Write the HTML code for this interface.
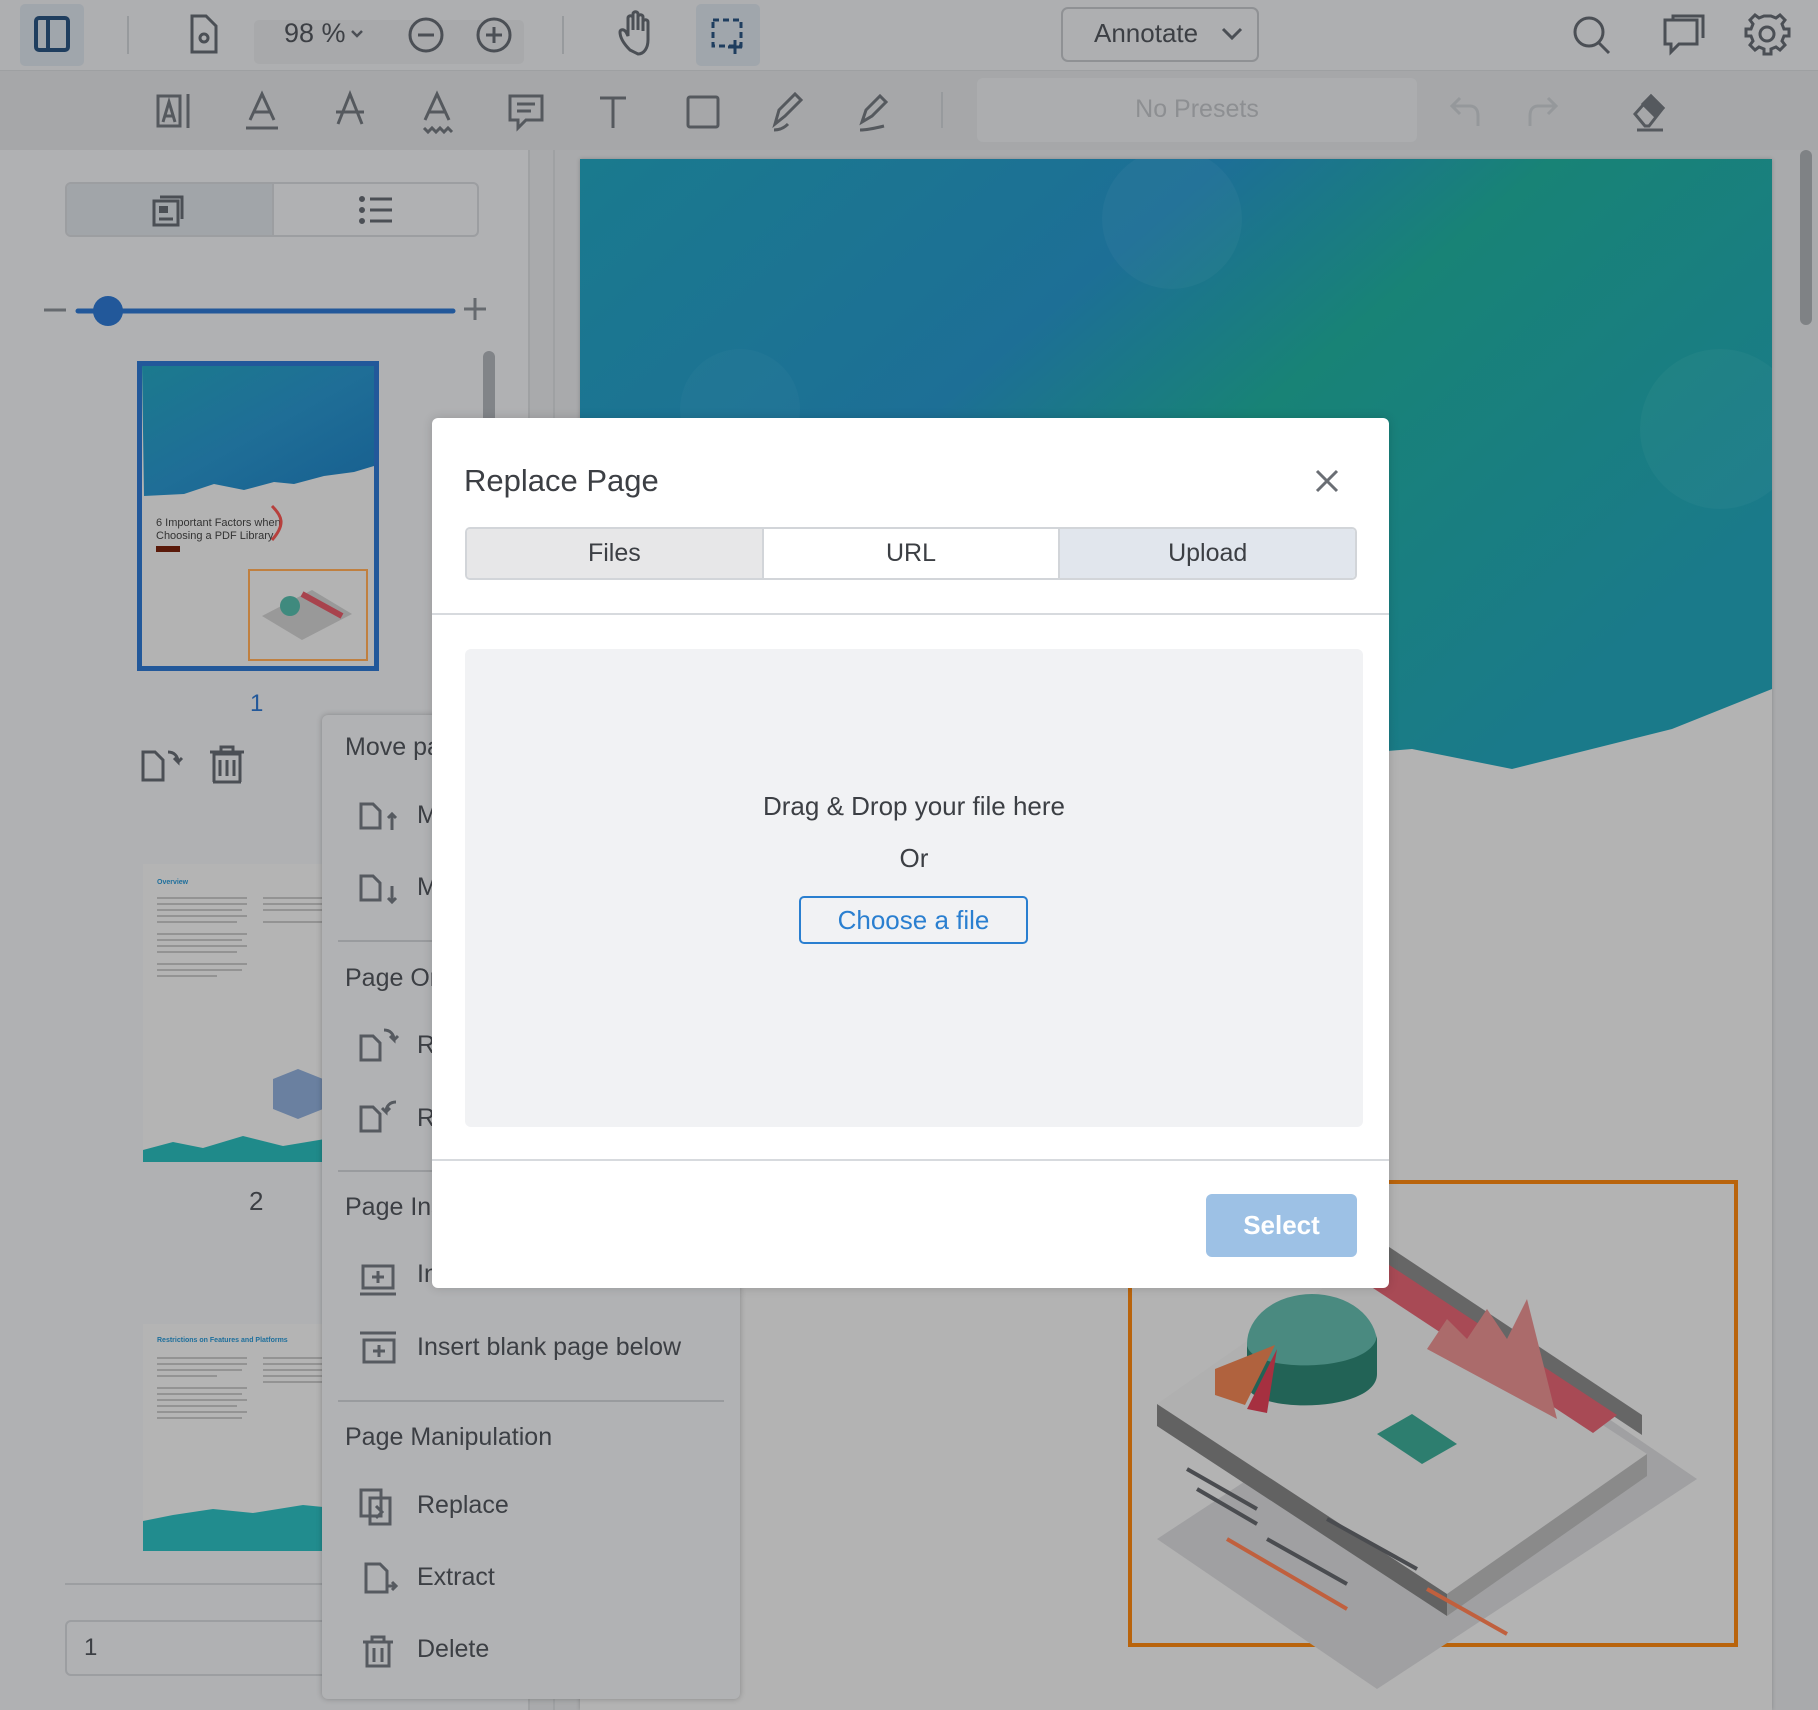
<!DOCTYPE html>
<html><head><meta charset="utf-8"><style>
*{margin:0;padding:0;box-sizing:border-box}
body{width:1818px;height:1710px;overflow:hidden;background:#a9aaac;font-family:"Liberation Sans",sans-serif;position:relative}
.a{position:absolute}
.t{font-family:"Liberation Sans",sans-serif;color:#3c3f44}
svg{position:absolute;overflow:visible}
</style></head><body>
<!-- top toolbar -->
<div class="a" style="left:0;top:0;width:1818px;height:70px;background:#aeafb1"></div>
<div class="a" style="left:0;top:70px;width:1818px;height:80px;background:#a6a7a9;border-top:1px solid #9ea0a2"></div>
<div class="a" style="left:20px;top:4px;width:64px;height:62px;background:#a0a6ac;border-radius:5px"></div>
<svg style="left:0;top:0" width="1818" height="150" fill="none" stroke="#4b4f55" stroke-width="3">
<rect x="36" y="18" width="32" height="32" rx="3" stroke="#1f3e5f" stroke-width="4"/><line x1="48" y1="18" x2="48" y2="50" stroke="#1f3e5f" stroke-width="4"/>
<line x1="128" y1="16" x2="128" y2="54" stroke="#979a9d" stroke-width="2"/>
<path d="M192 16h14l10 10v26h-24z"/><circle cx="204" cy="38" r="4"/>
<rect x="254" y="20" width="270" height="44" rx="5" fill="#a8a9ab" stroke="none"/>
<circle cx="426" cy="35" r="16"/><line x1="418" y1="35" x2="434" y2="35"/>
<circle cx="494" cy="35" r="16"/><line x1="486" y1="35" x2="502" y2="35"/><line x1="494" y1="27" x2="494" y2="43"/>
<path d="M352 31l5 5 5-5" stroke-width="2.5"/>
<line x1="563" y1="16" x2="563" y2="54" stroke="#979a9d" stroke-width="2"/>
<path d="M630 50c-6-6-10-12-10-18 0-3 4-3 6 0l2 4V18c0-3 5-3 5 0v12-16c0-3 5-3 5 0v16-13c0-3 5-3 5 0v14-9c0-3 5-3 5 0v18c0 8-4 14-10 14z"/>
<rect x="696" y="4" width="64" height="62" rx="5" fill="#a0a6ac" stroke="none"/>
<rect x="713" y="20" width="28" height="26" stroke="#1f3e5f" stroke-dasharray="6 4"/><path d="M735 40v14M728 47h14" stroke="#1f3e5f"/>
<rect x="1062" y="8" width="196" height="53" rx="6" fill="#aeafb1" stroke="#8f9194" stroke-width="2"/>
<path d="M1223 29l9 9 9-9"/>
<circle cx="1589" cy="32" r="14"/><line x1="1599" y1="43" x2="1609" y2="53"/>
<path d="M1665 20h32v24h-18l-8 8v-8h-6z"/><path d="M1673 20v-4h30v22"/>
<circle cx="1767" cy="34" r="7"/><path d="M1767 16l5 2 4-3 5 5-3 4 2 5h5v7h-5l-2 5 3 4-5 5-4-3-5 2v5h-7v-5l-5-2-4 3-5-5 3-4-2-5h-5v-7h5l2-5-3-4 5-5 4 3 5-2z" transform="translate(4 0)"/>
<g stroke="#55595e">
<rect x="158" y="96" width="22" height="30"/><path d="M163 122l6-20 6 20M165 116h8"/><line x1="188" y1="94" x2="188" y2="128"/>
<path d="M250 120l12-26 12 26M254 112h16"/><line x1="246" y1="128" x2="278" y2="128"/>
<path d="M338 124l12-30 12 30M336 112h28"/>
<path d="M425 120l12-26 12 26M429 112h16"/><path d="M424 128l4 4 4-4 4 4 4-4 4 4 4-4 4 4"/>
<path d="M510 96h32v24h-16l-8 8v-8h-8z"/><path d="M517 104h18M517 111h14"/>
<path d="M600 98h26M613 98v30"/>
<rect x="688" y="97" width="30" height="30" rx="2"/>
<path d="M775 124l4-14 16-16 6 6-16 16zM774 130c6 0 10-2 14-6"/>
<path d="M862 122l4-12 14-14 6 6-14 14zM860 130c8 0 16-2 24-4"/>
<line x1="942" y1="92" x2="942" y2="128" stroke="#979a9d" stroke-width="2"/>
<path d="M1460 98l-8 8 8 8M1452 106h18c6 0 8 5 8 10v10" stroke="#95989b"/>
<path d="M1548 98l8 8-8 8M1556 106h-18c-6 0-8 5-8 10v10" stroke="#95989b"/>
<path d="M1645 126l-10-12 16-18 12 12-14 18zM1637 130h26" stroke-width="3"/><path d="M1651 96l12 12-8 8-12-12z" fill="#55595e"/>
</g>
</svg>
<div class="a t" style="left:284px;top:18px;font-size:27px;color:#3c3f44">98 %</div>
<div class="a t" style="left:1094px;top:18px;font-size:26px;color:#3c3f44">Annotate</div>
<div class="a" style="left:977px;top:78px;width:440px;height:64px;background:#acadaf;border-radius:6px"></div>
<div class="a t" style="left:977px;top:95px;width:440px;text-align:center;font-size:25px;color:#8d8f92">No Presets</div>

<!-- left panel -->
<div class="a" style="left:0;top:150px;width:530px;height:1560px;background:#b0b1b3;border-right:2px solid #9fa1a3"></div>
<div class="a" style="left:553px;top:150px;width:2px;height:1560px;background:#9fa1a3"></div>
<div class="a" style="left:65px;top:182px;width:414px;height:55px;border:2px solid #9c9ea1;border-radius:6px;background:#b0b1b3;overflow:hidden"><div style="width:207px;height:100%;background:#a1a5a9;border-right:2px solid #9c9ea1"></div></div>
<svg style="left:0;top:0" width="560" height="800" fill="none" stroke="#4b4f55" stroke-width="3">
<rect x="154" y="201" width="24" height="24"/><path d="M160 197h22v22"/><rect x="159" y="206" width="9" height="7" fill="#4b4f55" stroke="none"/><path d="M159 219h14"/>
<g stroke-width="3"><circle cx="362" cy="199" r="1.5"/><circle cx="362" cy="210" r="1.5"/><circle cx="362" cy="221" r="1.5"/><path d="M370 199h22M370 210h22M370 221h22"/></g>
<line x1="44" y1="310" x2="66" y2="310" stroke="#666a6f" stroke-width="3"/>
<line x1="78" y1="311" x2="453" y2="311" stroke="#22589a" stroke-width="5" stroke-linecap="round"/>
<circle cx="108" cy="311" r="15" fill="#22589a" stroke="none"/>
<path d="M464 309h22M475 298v22" stroke="#666a6f"/>
<rect x="483" y="351" width="12" height="120" rx="6" fill="#818488" stroke="none"/>
<path d="M143 780v-28h12l8 8v20zM168 752c6 0 10 4 10 10l-4-4M178 762l4-4"/>
<path d="M213 782h28M214 782v-28h26v28M220 760v16M227 760v16M234 760v16M210 752h34M221 752v-5h12v5"/>
</svg>
<!-- thumbnail 1 -->
<div class="a" style="left:137px;top:361px;width:242px;height:310px;border:5px solid #22589a;background:#b3b3b3;overflow:hidden">
 <svg style="left:0;top:0" width="232" height="300"><defs><linearGradient id="g1" x1="0" y1="0" x2="1" y2="1"><stop offset="0" stop-color="#1b7a8e"/><stop offset=".5" stop-color="#1f6e97"/><stop offset="1" stop-color="#175f90"/></linearGradient></defs>
 <path d="M0 0h232v100l-20 6-30 4-30 8-20-2-30 8-30-6-30 10-40 2z" fill="url(#g1)"/>
 <text x="14" y="160" font-size="11" fill="#333" font-family="Liberation Sans">6 Important Factors when</text>
 <text x="14" y="173" font-size="11" fill="#333" font-family="Liberation Sans">Choosing a PDF Library</text>
 <rect x="14" y="180" width="24" height="6" fill="#5a1a0a"/>
 <path d="M130 140c10 10 14 18 0 34" stroke="#b7403d" stroke-width="3" fill="none"/>
 <rect x="107" y="204" width="118" height="90" fill="none" stroke="#c08040" stroke-width="2"/>
 <path d="M120 250l50-26 40 24-50 26z" fill="#999"/><circle cx="148" cy="240" r="10" fill="#3f8a7e"/><path d="M160 228l40 22" stroke="#a8434d" stroke-width="6"/>
 </svg>
</div>
<div class="a" style="left:250px;top:690px;font-size:24px;color:#22589a">1</div>
<!-- thumbnail 2 -->
<div class="a" style="left:143px;top:864px;width:200px;height:298px;background:#b4b4b4;overflow:hidden">
 <svg style="left:0;top:0" width="200" height="298">
 <text x="14" y="20" font-size="7" fill="#1e6f9c" font-weight="bold" font-family="Liberation Sans">Overview</text>
 <g stroke="#888" stroke-width="1.5"><path d="M14 34h90M14 40h90M14 46h85M14 52h90M14 58h80M14 70h90M14 76h85M14 82h90M14 88h80M14 100h90M14 106h85M14 112h60M120 34h80M120 40h80M120 46h80M120 58h80"/></g>
 <path d="M0 298v-12l30-8 30 6 40-12 40 10 60-10v26z" fill="#1f8a8a"/>
 <path d="M130 215l25-10 25 10v30l-25 10-25-10z" fill="#6a80a0"/>
 </svg>
</div>
<div class="a" style="left:249px;top:1186px;font-size:26px;color:#3c3f44">2</div>
<!-- thumbnail 3 -->
<div class="a" style="left:143px;top:1324px;width:200px;height:227px;background:#b4b4b4;overflow:hidden">
 <svg style="left:0;top:0" width="200" height="227">
 <text x="14" y="18" font-size="7" fill="#1e6f9c" font-weight="bold" font-family="Liberation Sans">Restrictions on Features and Platforms</text>
 <g stroke="#888" stroke-width="1.5"><path d="M14 34h90M14 40h90M14 46h85M14 52h60M14 64h90M14 70h85M14 76h90M14 82h80M14 88h90M14 94h85M120 34h80M120 40h80M120 46h80M120 52h80M120 58h80"/></g>
 <path d="M0 227v-30l30-6 40-6 40 4 50-8 40 4v42z" fill="#218c8e"/>
 </svg>
</div>
<div class="a" style="left:65px;top:1583px;width:460px;height:2px;background:#9c9ea1"></div>
<div class="a" style="left:65px;top:1620px;width:300px;height:56px;border:2px solid #9c9ea1;border-radius:6px"></div>
<div class="a t" style="left:84px;top:1634px;font-size:24px">1</div>

<!-- document page -->
<div class="a" style="left:580px;top:159px;width:1192px;height:1551px;background:#b3b3b3;overflow:hidden;box-shadow:0 0 4px rgba(0,0,0,.2)">
 <svg style="left:0;top:0" width="1192" height="700"><defs><linearGradient id="g2" x1="0" y1="0" x2="1" y2=".6"><stop offset="0" stop-color="#1a7a8e"/><stop offset=".4" stop-color="#1d6f96"/><stop offset=".6" stop-color="#188376"/><stop offset="1" stop-color="#1a7a8a"/></linearGradient></defs>
 <path d="M0 0h1192v530l-100 40-80 20-80 20-100 -20-120 10-160-20-200 20-200-10-152 0z" fill="url(#g2)"/>
 <circle cx="592" cy="60" r="70" fill="#fff" opacity=".03"/><circle cx="1140" cy="270" r="80" fill="#fff" opacity=".03"/><circle cx="160" cy="250" r="60" fill="#fff" opacity=".025"/>
 </svg>
 <svg style="left:547px;top:1020px" width="612" height="469">
 <rect x="3" y="3" width="606" height="463" fill="none" stroke="#b9640c" stroke-width="4"/>
 <path d="M30 360l320-210 220 150-320 210z" fill="#a0a0a2"/>
 <path d="M30 225l290 190 200-140 -290-190z" fill="#b0b0b0"/>
 <path d="M30 225v22l290 190v-22z" fill="#626262"/><path d="M320 415v22l200-140v-22z" fill="#8a8a8a"/>
 <path d="M235 50l280 186v20l-280-186z" fill="#666"/>
 <path d="M235 68l255 168-24 18-255-168z" fill="#a84a55"/>
 <ellipse cx="185" cy="165" rx="65" ry="50" fill="#4a8a80"/><path d="M120 165v40c0 30 130 30 130-10v-40c0 40-130 40-130 10z" fill="#226356"/>
 <path d="M88 190l60-24-30 60-30-10z" fill="#b0623e"/><path d="M150 170l-30 60 20 4z" fill="#a63040"/>
 <path d="M300 170l20-30 20 20 20-30 20 30 20-40 30 120z" fill="#ab6b6b"/>
 <path d="M250 255l35-20 45 30-35 20z" fill="#2d7e6f"/>
 <path d="M60 290l70 40M70 310l60 35M140 360l80 45M200 340l90 50" stroke="#4a4c50" stroke-width="4"/>
 <path d="M100 360l120 70M300 410l80 45" stroke="#c0603e" stroke-width="4"/>
 </svg>
</div>
<div class="a" style="left:1800px;top:150px;width:12px;height:175px;background:#7f8285;border-radius:6px"></div>

<!-- context menu -->
<div class="a" style="left:322px;top:715px;width:418px;height:984px;background:#b1b2b4;border-radius:6px;box-shadow:0 0 6px rgba(0,0,0,.25)"></div>
<div class="a t" style="left:345px;top:733px;font-size:25px">Move pa</div>
<div class="a t" style="left:345px;top:964px;font-size:25px">Page Or</div>
<div class="a t" style="left:345px;top:1193px;font-size:25px">Page Ins</div>
<div class="a t" style="left:345px;top:1423px;font-size:25px">Page Manipulation</div>
<div class="a t" style="left:417px;top:801px;font-size:25px">M</div>
<div class="a t" style="left:417px;top:873px;font-size:25px">M</div>
<div class="a t" style="left:417px;top:1031px;font-size:25px">R</div>
<div class="a t" style="left:417px;top:1104px;font-size:25px">R</div>
<div class="a t" style="left:417px;top:1260px;font-size:25px">In</div>
<div class="a t" style="left:417px;top:1333px;font-size:25px">Insert blank page below</div>
<div class="a t" style="left:417px;top:1491px;font-size:25px">Replace</div>
<div class="a t" style="left:417px;top:1563px;font-size:25px">Extract</div>
<div class="a t" style="left:417px;top:1635px;font-size:25px">Delete</div>
<div class="a" style="left:338px;top:940px;width:386px;height:2px;background:#999b9e"></div>
<div class="a" style="left:338px;top:1170px;width:386px;height:2px;background:#999b9e"></div>
<div class="a" style="left:338px;top:1400px;width:386px;height:2px;background:#999b9e"></div>
<svg style="left:0;top:0" width="800" height="1710" fill="none" stroke="#565a60" stroke-width="3">
<path d="M361 828v-24h12l7 7v17zM392 814v16M388 818l4-4 4 4"/>
<path d="M361 900v-24h12l7 7v17zM392 886v16M388 898l4 4 4-4"/>
<path d="M361 1060v-24h12l7 7v17zM384 1030c6 0 10 4 10 10l-4-4M394 1040l4-4"/>
<path d="M361 1131v-24h12l7 7v17zM396 1102c-6 0-10 4-10 10l-4-4M386 1112l4-4"/>
<path d="M363 1266h30v22h-30zM378 1271v12M372 1277h12M360 1294h36"/>
<path d="M364 1340h30v22h-30zM379 1345v12M373 1351h12M360 1333h36"/>
<path d="M361 1490h20v26h-20zM370 1498h20v26h-20zM376 1506l6 6-6 6"/>
<path d="M366 1564h14l7 7v21h-21zM386 1586h10M392 1582l4 4-4 4"/>
<path d="M367 1642h22v24h-22zM363 1642h30M372 1642v-5h12v5M374 1648v14M382 1648v14"/>
</svg>

<!-- modal -->
<div class="a" style="left:432px;top:418px;width:957px;height:870px;background:#fff;border-radius:6px;box-shadow:0 0 10px rgba(0,0,0,.15)">
 <div class="a t" style="left:32px;top:45px;font-size:31px;color:#3c3f44">Replace Page</div>
 <svg style="left:883px;top:51px" width="24" height="24" stroke="#6a6e74" stroke-width="3"><path d="M2 2l20 20M22 2L2 22"/></svg>
 <div class="a" style="left:33px;top:109px;width:892px;height:53px;border:2px solid #d2d5d9;border-radius:5px;overflow:hidden;display:flex">
  <div style="flex:1;background:#e7e7e8;border-right:2px solid #d2d5d9;text-align:center;line-height:49px;font-size:25px;color:#3c3f44">Files</div>
  <div style="flex:1;background:#fff;border-right:2px solid #d2d5d9;text-align:center;line-height:49px;font-size:25px;color:#3c3f44">URL</div>
  <div style="flex:1;background:#e1e6ed;text-align:center;line-height:49px;font-size:25px;color:#3c3f44">Upload</div>
 </div>
 <div class="a" style="left:0;top:195px;width:957px;height:2px;background:#d7dade"></div>
 <div class="a" style="left:33px;top:231px;width:898px;height:478px;background:#f1f2f4;border-radius:6px"></div>
 <div class="a t" style="left:33px;top:373px;width:898px;text-align:center;font-size:26px">Drag &amp; Drop your file here</div>
 <div class="a t" style="left:33px;top:425px;width:898px;text-align:center;font-size:26px">Or</div>
 <div class="a" style="left:367px;top:478px;width:229px;height:48px;border:2px solid #2a7fd0;border-radius:5px;text-align:center;line-height:44px;font-size:26px;color:#2a7fd0">Choose a file</div>
 <div class="a" style="left:0;top:741px;width:957px;height:2px;background:#d7dade"></div>
 <div class="a" style="left:774px;top:776px;width:151px;height:63px;background:#9dc1e5;border-radius:6px;text-align:center;line-height:63px;font-size:26px;color:#fff;font-weight:bold">Select</div>
</div>
</body></html>
